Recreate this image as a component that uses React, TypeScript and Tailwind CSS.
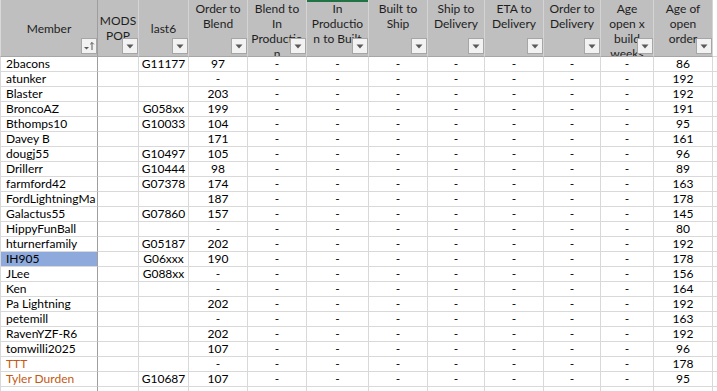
type Row = { name: string; pop?: string; last6?: string; blend: string; age: string; color?: string; sel?: boolean };

const rows: Row[] = [
  { name: '2bacons', last6: 'G11177', blend: '97', age: '86' },
  { name: 'atunker', blend: '-', age: '192' },
  { name: 'Blaster', blend: '203', age: '192' },
  { name: 'BroncoAZ', last6: 'G058xx', blend: '199', age: '191' },
  { name: 'Bthomps10', last6: 'G10033', blend: '104', age: '95' },
  { name: 'Davey B', blend: '171', age: '161' },
  { name: 'dougj55', last6: 'G10497', blend: '105', age: '96' },
  { name: 'Drillerr', last6: 'G10444', blend: '98', age: '89' },
  { name: 'farmford42', last6: 'G07378', blend: '174', age: '163' },
  { name: 'FordLightningMa', blend: '187', age: '178' },
  { name: 'Galactus55', last6: 'G07860', blend: '157', age: '145' },
  { name: 'HippyFunBall', blend: '-', age: '80' },
  { name: 'hturnerfamily', last6: 'G05187', blend: '202', age: '192' },
  { name: 'IH905', last6: 'G06xxx', blend: '190', age: '178', sel: true },
  { name: 'JLee', last6: 'G088xx', blend: '-', age: '156' },
  { name: 'Ken', blend: '-', age: '164' },
  { name: 'Pa Lightning', blend: '202', age: '192' },
  { name: 'petemill', blend: '-', age: '163' },
  { name: 'RavenYZF-R6', blend: '202', age: '192' },
  { name: 'tomwilli2025', blend: '107', age: '96' },
  { name: 'TTT', blend: '-', age: '178', color: 'text-[#c65911]' },
  { name: 'Tyler Durden', last6: 'G10687', blend: '107', age: '95', color: 'text-[#c65911]' },
];

const widths = [
  'w-[98px]', 'w-[41px]', 'w-[50px]', 'w-[59px]', 'w-[59px]', 'w-[62px]',
  'w-[59px]', 'w-[57px]', 'w-[59px]', 'w-[57px]', 'w-[53px]', 'w-[59px]',
];

const headers: { lines: string[]; pad: string }[] = [
  { lines: ['Member'], pad: 'pt-[21px]' },
  { lines: ['MODS', 'POP'], pad: 'pt-[13px]' },
  { lines: ['last6'], pad: 'pt-[21px]' },
  { lines: ['Order to', 'Blend'], pad: 'pt-[1px]' },
  { lines: ['Blend to', 'In', 'Productio', 'n'], pad: 'pt-[1px]' },
  { lines: ['In', 'Productio', 'n to Built'], pad: 'pt-[1px]' },
  { lines: ['Built to', 'Ship'], pad: 'pt-[1px]' },
  { lines: ['Ship to', 'Delivery'], pad: 'pt-[1px]' },
  { lines: ['ETA to', 'Delivery'], pad: 'pt-[1px]' },
  { lines: ['Order to', 'Delivery'], pad: 'pt-[1px]' },
  { lines: ['Age', 'open x', 'build', 'weeks'], pad: 'pt-[1px]' },
  { lines: ['Age of', 'open', 'order'], pad: 'pt-[1px]' },
];

function FilterButton({ sorted }: { sorted?: boolean }) {
  return (
    <div className="absolute right-0 top-[38px] w-[16px] h-[16px] bg-[#f2f2f2] border border-[#a6a6a6] flex items-center justify-center">
      {sorted ? (
        <svg width="12" height="10" viewBox="0 0 12 10">
          <path d="M1 6h5l-2.5 2.5z" fill="#595959" />
          <path d="M9 9V1.5M7.2 3.3L9 1.5l1.8 1.8" stroke="#595959" strokeWidth="1" fill="none" />
        </svg>
      ) : (
        <svg width="8" height="5" viewBox="0 0 8 5">
          <path d="M0.5 0.5h7L4 4.5z" fill="#595959" />
        </svg>
      )}
    </div>
  );
}

function Cell({ i, children, className = '' }: { i: number; children?: React.ReactNode; className?: string }) {
  const edge = i === 0 ? 'border-r-[#9e9e9e] border-l border-l-[#d9d9d9] justify-start pl-[5px]' : 'border-r-[#d9d9d9] justify-center';
  return (
    <div className={`${widths[i]} h-[15px] shrink-0 flex items-center overflow-hidden whitespace-nowrap border-r border-b border-b-[#d9d9d9] ${edge} ${className}`}>
      {children}
    </div>
  );
}

export default function App() {
  const extra = [0, 1];
  return (
    <div className="w-[717px] h-[391px] overflow-hidden bg-white text-[12px] leading-[14px] text-black" style={{ fontFamily: 'Lato, "Liberation Sans", sans-serif' }}>
      <div className="flex">
        {headers.map((h, i) => (
          <div
            key={i}
            className={`relative ${widths[i]} h-[57px] shrink-0 overflow-hidden bg-[#bfbfbf] border-b border-b-[#a6a6a6] border-r ${i === 0 ? 'border-r-[#9e9e9e] border-l border-l-[#d9d9d9]' : 'border-r-[#d4d4d4]'}`}
          >
            {i === 5 && <div className="absolute left-0 right-0 top-0 h-[2px] bg-[#217346]" />}
            <div className={`flex flex-col items-center leading-[15px] text-[#1e1e1e] whitespace-nowrap ${h.pad}`}>
              {h.lines.map((l) => (
                <span key={l}>{l}</span>
              ))}
            </div>
            <FilterButton sorted={i === 0} />
          </div>
        ))}
        <div className="flex-1 h-[57px] border-b border-b-[#d9d9d9]" />
      </div>
      {rows.map((r) => (
        <div key={r.name} className="flex">
          <Cell i={0} className={`${r.sel ? 'bg-[#8ea9db]' : ''} ${r.color ?? ''}`}>{r.name}</Cell>
          <Cell i={1}>{r.pop}</Cell>
          <Cell i={2}>{r.last6}</Cell>
          <Cell i={3}>{r.blend}</Cell>
          {[4, 5, 6, 7, 8, 9, 10].map((i) => (
            <Cell key={i} i={i}>-</Cell>
          ))}
          <Cell i={11}>{r.age}</Cell>
          <div className="flex-1 h-[15px] border-b border-b-[#d9d9d9]" />
        </div>
      ))}
      {extra.map((k) => (
        <div key={k} className="flex">
          {widths.map((_, i) => (
            <Cell key={i} i={i} />
          ))}
          <div className="flex-1 h-[15px] border-b border-b-[#d9d9d9]" />
        </div>
      ))}
    </div>
  );
}
